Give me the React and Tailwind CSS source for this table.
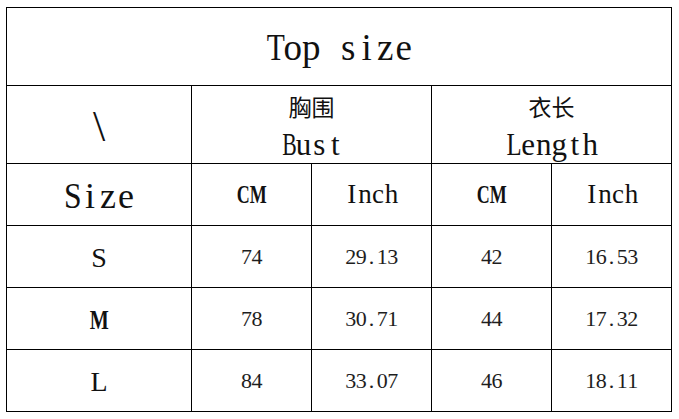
import React from "react";

const serif = "font-['Liberation_Serif']";
const cjk = "font-['Noto_Sans_CJK_SC']";

// wide capitals get squeezed so they fit a half-width cell, like SimSun
const squeeze = {
  B: "scale-x-[0.7]",
  T: "scale-x-[0.8]",
  L: "scale-x-[0.8]",
  S: "scale-x-[0.88]",
};

// SimSun-like half-width spacing: every glyph sits in a fixed cell
const Mono = ({ text, cell = "w-[0.5em]" }) => (
  <span className="whitespace-nowrap">
    {text.split("").map((ch, i) => (
      <span key={i} className={`inline-block text-center ${cell} ${squeeze[ch] || ""}`}>
        {ch === " " ? "\u00a0" : ch}
      </span>
    ))}
  </span>
);

const Narrow = ({ children }) => (
  <span className="inline-block scale-x-[0.72] font-bold">{children}</span>
);

const rows = [
  { size: "S", bold: false, cm1: "74", in1: "29.13", cm2: "42", in2: "16.53" },
  { size: "M", bold: true, cm1: "78", in1: "30.71", cm2: "44", in2: "17.32" },
  { size: "L", bold: false, cm1: "84", in1: "33.07", cm2: "46", in2: "18.11" },
];

const cell = "border-r border-b border-black flex items-center justify-center";
const num = `${cell} text-[22px] text-[#1e1e1e]`;

export default function App() {
  return (
    <div className={`w-[679px] h-[419px] bg-white pt-[7px] pl-[6px] text-[#111] ${serif}`}>
      <div className="grid grid-cols-[185px_120px_120px_120px_120px] grid-rows-[78px_78px_62px_62px_62px_62px] w-[666px] border-l border-t border-black">
        {/* title */}
        <div className={`${cell} col-span-5 text-[37px] pt-[2px]`}>
          <Mono text="Top size" />
        </div>

        {/* group headers */}
        <div className={`${cell} text-[44px] pt-[4px]`}>\</div>
        <div className={`${cell} col-span-2 flex-col`}>
          <div className={`h-[30px] flex items-center text-[23px] pt-[3px] ${cjk}`}>胸围</div>
          <div className="h-[40px] flex items-end text-[31px] leading-none">
            <Mono text="Bust" cell="w-[0.51em]" />
          </div>
        </div>
        <div className={`${cell} col-span-2 flex-col`}>
          <div className={`h-[30px] flex items-center text-[23px] pt-[3px] ${cjk}`}>衣长</div>
          <div className="h-[40px] flex items-end text-[31px] leading-none">
            <Mono text="Length" />
          </div>
        </div>

        {/* unit headers */}
        <div className={`${cell} text-[36px] pt-[2px]`}>
          <Mono text="Size" />
        </div>
        <div className={`${cell} text-[25px]`}>
          <Narrow>CM</Narrow>
        </div>
        <div className={`${cell} text-[27px]`}>
          <Mono text="Inch" cell="w-[0.49em]" />
        </div>
        <div className={`${cell} text-[25px]`}>
          <Narrow>CM</Narrow>
        </div>
        <div className={`${cell} text-[27px]`}>
          <Mono text="Inch" cell="w-[0.49em]" />
        </div>

        {/* data */}
        {rows.map((r) => (
          <React.Fragment key={r.size}>
            <div className={`${cell} text-[28px] pt-[2px]`}>
              {r.bold ? <Narrow>{r.size}</Narrow> : r.size}
            </div>
            <div className={num}>
              <Mono text={r.cm1} cell="w-[0.48em]" />
            </div>
            <div className={num}>
              <Mono text={r.in1} cell="w-[0.48em]" />
            </div>
            <div className={num}>
              <Mono text={r.cm2} cell="w-[0.48em]" />
            </div>
            <div className={num}>
              <Mono text={r.in2} cell="w-[0.48em]" />
            </div>
          </React.Fragment>
        ))}
      </div>
    </div>
  );
}
